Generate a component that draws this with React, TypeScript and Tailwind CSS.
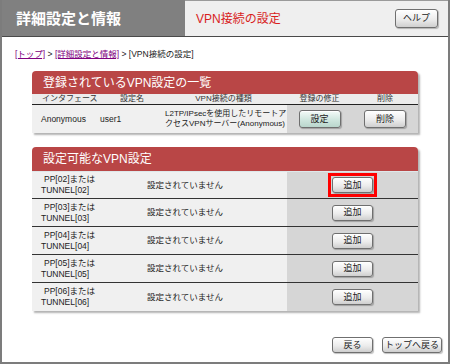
import React from "react";

const font = { fontFamily: '"Liberation Sans", "Noto Sans CJK JP", "Noto Sans", sans-serif' };

function Btn({ children, w, h, teal }: { children: React.ReactNode; w: string; h: string; teal?: boolean }) {
  return (
    <div
      className={`${w} ${h} flex items-center justify-center rounded-[3px] border border-[#6f6f6f] text-[9px] leading-none text-[#222] whitespace-nowrap shadow-[inset_0_1px_0_#fff,1px_1px_1px_rgba(0,0,0,0.25)] ${
        teal
          ? "bg-[linear-gradient(#f4fbf8,#cfe6de_55%,#b9d6cc)]"
          : "bg-[linear-gradient(#ffffff,#ececec_55%,#cfcfcf)]"
      }`}
    >
      {children}
    </div>
  );
}

const rows = ["02", "03", "04", "05", "06"];

export default function App() {
  return (
    <div style={font} className="w-[450px] h-[364px] bg-white border-l-2 border-r-2 border-b-2 border-[#7c7c7c] flex flex-col overflow-hidden">
      {/* header */}
      <div className="h-[37px] flex border-b border-[#4a4a4a] shrink-0">
        <div className="w-[183px] bg-[#808080] flex items-center pl-[14px] text-white font-bold text-[15px] leading-none">
          詳細設定と情報
        </div>
        <div className="flex-1 bg-[#efefef] border-t border-[#9a9a9a] flex items-center pl-[11px] pr-[10px]">
          <div className="text-[12px] leading-none text-[#d81e1e] flex-1">VPN接続の設定</div>
          <Btn w="w-[43px]" h="h-[19px]">ヘルプ</Btn>
        </div>
      </div>

      {/* breadcrumb */}
      <div className="mt-[11px] pl-[13px] text-[8.5px] leading-[12px] text-[#222] whitespace-nowrap">
        <span className="text-[#800080] underline">[トップ]</span>
        <span> &gt; </span>
        <span className="text-[#800080] underline">[詳細設定と情報]</span>
        <span> &gt; [VPN接続の設定]</span>
      </div>

      {/* panel 1 */}
      <div className="mt-[11px] ml-[30px] w-[386px] rounded-t-[4px] shadow-[2px_2px_2px_rgba(0,0,0,0.3)] overflow-hidden">
        <div className="h-[23px] bg-[#b94646] flex items-center pl-[11px] text-white text-[12px] leading-none">
          登録されているVPN設定の一覧
        </div>
        <div className="h-[11px] bg-[#ececec] border-b border-[#222] grid grid-cols-[63px_65px_127px_65px_66px] text-[8px] leading-[10px] text-[#333] whitespace-nowrap">
          <div className="pl-[10px]">インタフェース</div>
          <div className="pl-[25px]">設定名</div>
          <div className="text-center">VPN接続の種類</div>
          <div className="text-center">登録の修正</div>
          <div className="text-center">削除</div>
        </div>
        <div className="h-[28px] grid grid-cols-[63px_65px_127px_65px_66px] text-[8px] leading-[10px] text-[#222] whitespace-nowrap">
          <div className="bg-[#f0f0f0] flex items-center pl-[9px] text-[8.5px]">Anonymous</div>
          <div className="bg-[#f0f0f0] flex items-center pl-[5px] text-[8.5px]">user1</div>
          <div className="bg-[#f0f0f0] flex items-center pl-[5px]">
            <div>
              L2TP/IPsecを使用したリモートア
              <br />
              クセスVPNサーバー(Anonymous)
            </div>
          </div>
          <div className="bg-[#d6d6d6] flex items-center justify-center">
            <Btn w="w-[42px]" h="h-[18px]" teal>
              設定
            </Btn>
          </div>
          <div className="bg-[#d6d6d6] flex items-center justify-center">
            <Btn w="w-[42px]" h="h-[18px]">削除</Btn>
          </div>
        </div>
      </div>

      {/* panel 2 */}
      <div className="mt-[14px] ml-[30px] w-[386px] rounded-t-[4px] shadow-[2px_2px_2px_rgba(0,0,0,0.3)] overflow-hidden">
        <div className="h-[25px] bg-[#b94646] flex items-center pl-[11px] text-white text-[12px] leading-none border-b border-[#dfe8ea]">
          設定可能なVPN設定
        </div>
        {rows.map((n, i) => (
          <div
            key={n}
            className={`${i === 0 ? "h-[27px]" : "h-[28px]"} grid grid-cols-[98px_157px_131px] text-[8.5px] leading-[11px] text-[#222] whitespace-nowrap ${
              i < rows.length - 1 ? "border-b border-[#333]" : ""
            }`}
          >
            <div className="bg-[#f0f0f0] flex items-center pl-[9px]">
              <div>
                <span className="ml-[3px]">PP[{n}]または</span>
                <br />
                TUNNEL[{n}]
              </div>
            </div>
            <div className="bg-[#f0f0f0] flex items-center pl-[17px] text-[8.5px]">設定されていません</div>
            <div className="bg-[#d6d6d6] flex items-center justify-center">
              {i === 0 ? (
                <div className="border-[3px] border-[#ff0000] p-[1px]">
                  <Btn w="w-[41px]" h="h-[16px]">追加</Btn>
                </div>
              ) : (
                <Btn w="w-[41px]" h="h-[16px]">追加</Btn>
              )}
            </div>
          </div>
        ))}
      </div>

      {/* bottom buttons */}
      <div className="mt-[26px] flex justify-end gap-[9px] pr-[6px]">
        <Btn w="w-[41px]" h="h-[16px]">戻る</Btn>
        <Btn w="w-[60px]" h="h-[16px]">トップへ戻る</Btn>
      </div>
    </div>
  );
}
